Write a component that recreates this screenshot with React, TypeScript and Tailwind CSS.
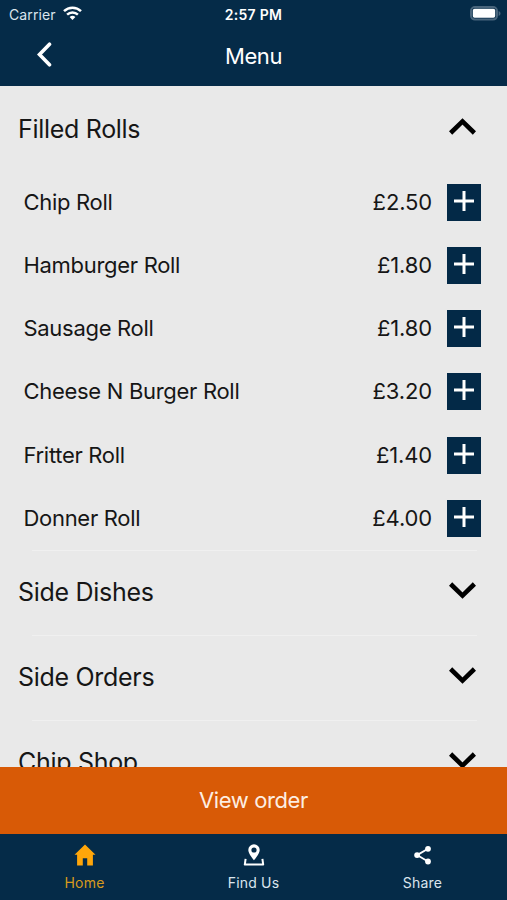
import { useState } from 'react';

interface MenuItem {
  name: string;
  price: string;
}

interface MenuSection {
  title: string;
  items: MenuItem[];
}

const sections: MenuSection[] = [
  {
    title: 'Filled Rolls',
    items: [
      { name: 'Chip Roll', price: '£2.50' },
      { name: 'Hamburger Roll', price: '£1.80' },
      { name: 'Sausage Roll', price: '£1.80' },
      { name: 'Cheese N Burger Roll', price: '£3.20' },
      { name: 'Fritter Roll', price: '£1.40' },
      { name: 'Donner Roll', price: '£4.00' },
    ],
  },
  { title: 'Side Dishes', items: [] },
  { title: 'Side Orders', items: [] },
  { title: 'Chip Shop', items: [] },
];

const StatusBar = () => (
  <div className="grid grid-cols-3 items-center h-7 pl-[9px] pr-[6px] text-white">
    <div className="flex items-center gap-[7px]">
      <span className="text-[14px] tracking-[0.1px] text-[#dbe5ee]">Carrier</span>
      <svg className="mt-[-2px]" width="19" height="14" viewBox="0 0 19 14" fill="none" stroke="currentColor" strokeWidth="2.5">
        <path d="M1 5.2a12.2 12.2 0 0 1 17 0" />
        <path d="M4.1 8.6a7.8 7.8 0 0 1 10.8 0" />
        <path d="M9.5 14 6.6 11.1a4.2 4.2 0 0 1 5.8 0z" fill="currentColor" stroke="none" />
      </svg>
    </div>
    <span className="pr-[3px] text-center text-[14px] font-semibold tracking-[0.3px]">2:57 PM</span>
    <svg className="justify-self-end mt-[-2px]" width="31" height="15" viewBox="0 0 31 15" fill="none">
      <rect x="1" y="1" width="26" height="12.6" rx="4" stroke="#49657c" strokeWidth="2" />
      <rect x="2.8" y="2.8" width="22.4" height="9" rx="1.8" fill="#fff" />
      <path d="M28.6 5v5c1.2-.5 1.9-1.4 1.9-2.5S29.8 5.5 28.6 5z" fill="#49657c" />
    </svg>
  </div>
);

const Chevron = ({ open }: { open: boolean }) => (
  <svg
    className={open ? 'mt-[-5px]' : 'mt-[-5px] rotate-180'}
    width="27"
    height="17"
    viewBox="0 0 27 17"
    fill="none"
    stroke="#000"
    strokeWidth="4.6"
  >
    <path d="M1.6 15 13.5 3.4 25.4 15" />
  </svg>
);

const ItemRow = ({ item }: { item: MenuItem }) => (
  <li className="flex items-center h-[63.15px] pl-[23.5px] pr-[26px] text-[22px] text-[#161616]">
    <span className="flex-1 tracking-[-0.3px]">{item.name}</span>
    <span className="tracking-[-0.15px]">{item.price}</span>
    <button className="ml-[15px] w-[34px] h-[37px] flex justify-center items-center bg-[#032947] text-white" aria-label={`Add ${item.name}`}>
      <svg className="mb-[3px]" width="20" height="20" viewBox="0 0 20 20" stroke="currentColor" strokeWidth="3">
        <path d="M10 0v20M0 10h20" />
      </svg>
    </button>
  </li>
);

const HomeIcon = () => (
  <svg width="22" height="22" viewBox="0 0 22 22" fill="currentColor">
    <path d="M11 .5 21.5 10.8h-2.6v10.7h-5.7v-7.3H8.8v7.3H3.1V10.8H.5z" />
  </svg>
);

const PinIcon = () => (
  <svg width="22" height="22" viewBox="0 0 22 22" fill="none">
    <path
      fillRule="evenodd"
      fill="currentColor"
      d="M11 .3a5.7 5.7 0 0 0-5.7 5.7C5.3 10 11 16.2 11 16.2S16.7 10 16.7 6A5.7 5.7 0 0 0 11 .3zm0 3.1a2.6 2.6 0 1 1 0 5.2 2.6 2.6 0 0 1 0-5.2z"
    />
    <path d="M2.6 14.8 1.8 20.6h18.4l-.8-5.8" stroke="currentColor" strokeWidth="2" strokeLinejoin="round" />
  </svg>
);

const ShareIcon = () => (
  <svg width="22" height="22" viewBox="0 0 22 22" fill="currentColor">
    <path d="M16 4.8 5.1 11.1 16 17.5" fill="none" stroke="currentColor" strokeWidth="1.8" />
    <circle cx="16" cy="4.8" r="2.9" />
    <circle cx="5.1" cy="11.1" r="2.9" />
    <circle cx="16" cy="17.5" r="2.9" />
  </svg>
);

const tabs = [
  { label: 'Home', Icon: HomeIcon },
  { label: 'Find Us', Icon: PinIcon },
  { label: 'Share', Icon: ShareIcon },
];

export default function App() {
  const [openSection, setOpenSection] = useState<string | null>('Filled Rolls');
  const [activeTab, setActiveTab] = useState('Home');

  return (
    <div className="flex flex-col w-full h-[900px] overflow-hidden bg-[#e9e9e9] font-['Inter',sans-serif]">
      <header className="h-[86px] flex-shrink-0 bg-[#052b48]">
        <StatusBar />
        <div className="grid grid-cols-3 items-center h-[56px] text-white">
          <button className="ml-[37px] mt-[-4px] w-4" aria-label="Back">
            <svg width="15" height="25" viewBox="0 0 15 25" fill="none" stroke="currentColor" strokeWidth="3.6" strokeLinecap="round">
              <path d="M12.5 2.2 2.5 12.5l10 10.3" />
            </svg>
          </button>
          <h1 className="text-center text-[22px] tracking-[-0.4px]">Menu</h1>
        </div>
      </header>

      <main className="flex-1 min-h-0 overflow-hidden pt-px">
        {sections.map(({ title, items }) => (
          <section key={title}>
            <button
              className="flex justify-between items-center w-full h-[84px] pl-[18px] pr-[31px] text-[25px] tracking-[-0.3px] text-[#161616]"
              onClick={() => setOpenSection(openSection === title ? null : title)}
            >
              <span className={openSection === title ? 'pt-[2px]' : ''}>{title}</span>
              <Chevron open={openSection === title} />
            </button>
            {openSection === title && (
              <ul>
                {items.map((item) => (
                  <ItemRow key={item.name} item={item} />
                ))}
              </ul>
            )}
            <div className="h-px ml-8 mr-[30px] bg-[#f0f0f0]" />
          </section>
        ))}
      </main>

      <button className="h-[67px] flex-shrink-0 bg-[#d85a06] text-[22px] tracking-[-0.4px] text-[#fdeee2]">View order</button>

      <nav className="grid grid-cols-3 h-[66px] flex-shrink-0 bg-[#052b48]">
        {tabs.map(({ label, Icon }) => (
          <button
            key={label}
            onClick={() => setActiveTab(label)}
            className={`flex flex-col items-center pt-[10px] ${activeTab === label ? 'text-[#ffa60a]' : 'text-white'}`}
          >
            <Icon />
            <span className={`mt-[7px] text-[14px] leading-5 tracking-[0.2px] ${activeTab === label ? 'text-[#d99a1c]' : 'text-[#dbe5ee]'}`}>
              {label}
            </span>
          </button>
        ))}
      </nav>
    </div>
  );
}
